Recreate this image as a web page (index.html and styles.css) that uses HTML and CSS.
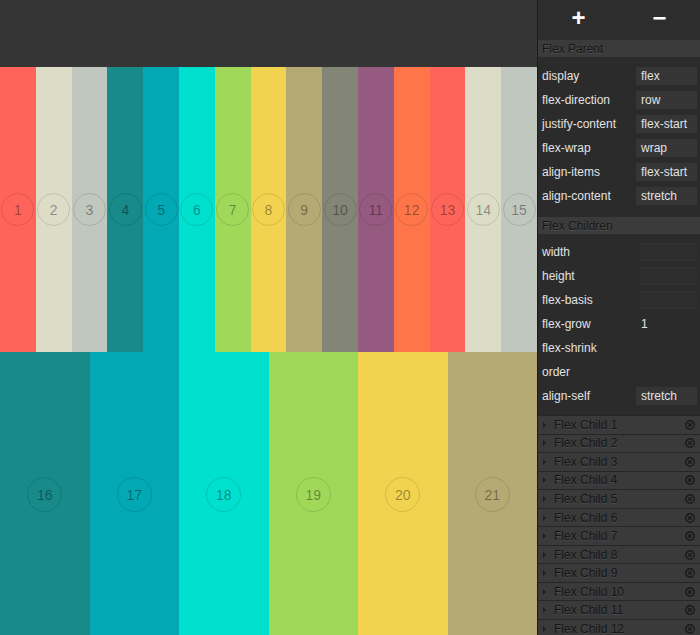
FILE: index.html
```html
<!DOCTYPE html>
<html>
<head>
<meta charset="utf-8">
<link rel="stylesheet" href="styles.css">
</head>
<body>
<div class="app">
  <div class="stage">
    <div class="topbar"></div>
    <div class="row row1">
      <div class="item c1"><span class="num">1</span></div>
      <div class="item c2"><span class="num">2</span></div>
      <div class="item c3"><span class="num">3</span></div>
      <div class="item c4"><span class="num">4</span></div>
      <div class="item c5"><span class="num">5</span></div>
      <div class="item c6"><span class="num">6</span></div>
      <div class="item c7"><span class="num">7</span></div>
      <div class="item c8"><span class="num">8</span></div>
      <div class="item c9"><span class="num">9</span></div>
      <div class="item c10"><span class="num">10</span></div>
      <div class="item c11"><span class="num">11</span></div>
      <div class="item c12"><span class="num">12</span></div>
      <div class="item c1"><span class="num">13</span></div>
      <div class="item c2"><span class="num">14</span></div>
      <div class="item c3"><span class="num">15</span></div>
    </div>
    <div class="row row2">
      <div class="item c4"><span class="num">16</span></div>
      <div class="item c5"><span class="num">17</span></div>
      <div class="item c6"><span class="num">18</span></div>
      <div class="item c7"><span class="num">19</span></div>
      <div class="item c8"><span class="num">20</span></div>
      <div class="item c9"><span class="num">21</span></div>
    </div>
  </div>
  <div class="panel">
    <div class="tools">
      <div class="tool">+</div>
      <div class="tool">−</div>
    </div>
    <div class="section-head">Flex Parent</div>
    <div class="props parent-props">
      <div class="prop"><span class="label">display</span><span class="field">flex</span></div>
      <div class="prop"><span class="label">flex-direction</span><span class="field">row</span></div>
      <div class="prop"><span class="label">justify-content</span><span class="field">flex-start</span></div>
      <div class="prop"><span class="label">flex-wrap</span><span class="field">wrap</span></div>
      <div class="prop"><span class="label">align-items</span><span class="field">flex-start</span></div>
      <div class="prop"><span class="label">align-content</span><span class="field">stretch</span></div>
    </div>
    <div class="section-head">Flex Children</div>
    <div class="props child-props">
      <div class="prop"><span class="label">width</span><span class="field empty"></span></div>
      <div class="prop"><span class="label">height</span><span class="field empty"></span></div>
      <div class="prop"><span class="label">flex-basis</span><span class="field empty"></span></div>
      <div class="prop"><span class="label">flex-grow</span><span class="field plain">1</span></div>
      <div class="prop"><span class="label">flex-shrink</span><span class="field none"></span></div>
      <div class="prop"><span class="label">order</span><span class="field none"></span></div>
      <div class="prop"><span class="label">align-self</span><span class="field">stretch</span></div>
    </div>
    <div class="children">
      <div class="child"><span class="arrow"></span><span class="cname">Flex Child 1</span><svg class="close" viewBox="0 0 10 10"><circle cx="5" cy="5" r="4.2"/><path d="M3.3 3.3L6.7 6.7M6.7 3.3L3.3 6.7"/></svg></div>
      <div class="child"><span class="arrow"></span><span class="cname">Flex Child 2</span><svg class="close" viewBox="0 0 10 10"><circle cx="5" cy="5" r="4.2"/><path d="M3.3 3.3L6.7 6.7M6.7 3.3L3.3 6.7"/></svg></div>
      <div class="child"><span class="arrow"></span><span class="cname">Flex Child 3</span><svg class="close" viewBox="0 0 10 10"><circle cx="5" cy="5" r="4.2"/><path d="M3.3 3.3L6.7 6.7M6.7 3.3L3.3 6.7"/></svg></div>
      <div class="child"><span class="arrow"></span><span class="cname">Flex Child 4</span><svg class="close" viewBox="0 0 10 10"><circle cx="5" cy="5" r="4.2"/><path d="M3.3 3.3L6.7 6.7M6.7 3.3L3.3 6.7"/></svg></div>
      <div class="child"><span class="arrow"></span><span class="cname">Flex Child 5</span><svg class="close" viewBox="0 0 10 10"><circle cx="5" cy="5" r="4.2"/><path d="M3.3 3.3L6.7 6.7M6.7 3.3L3.3 6.7"/></svg></div>
      <div class="child"><span class="arrow"></span><span class="cname">Flex Child 6</span><svg class="close" viewBox="0 0 10 10"><circle cx="5" cy="5" r="4.2"/><path d="M3.3 3.3L6.7 6.7M6.7 3.3L3.3 6.7"/></svg></div>
      <div class="child"><span class="arrow"></span><span class="cname">Flex Child 7</span><svg class="close" viewBox="0 0 10 10"><circle cx="5" cy="5" r="4.2"/><path d="M3.3 3.3L6.7 6.7M6.7 3.3L3.3 6.7"/></svg></div>
      <div class="child"><span class="arrow"></span><span class="cname">Flex Child 8</span><svg class="close" viewBox="0 0 10 10"><circle cx="5" cy="5" r="4.2"/><path d="M3.3 3.3L6.7 6.7M6.7 3.3L3.3 6.7"/></svg></div>
      <div class="child"><span class="arrow"></span><span class="cname">Flex Child 9</span><svg class="close" viewBox="0 0 10 10"><circle cx="5" cy="5" r="4.2"/><path d="M3.3 3.3L6.7 6.7M6.7 3.3L3.3 6.7"/></svg></div>
      <div class="child"><span class="arrow"></span><span class="cname">Flex Child 10</span><svg class="close" viewBox="0 0 10 10"><circle cx="5" cy="5" r="4.2"/><path d="M3.3 3.3L6.7 6.7M6.7 3.3L3.3 6.7"/></svg></div>
      <div class="child"><span class="arrow"></span><span class="cname">Flex Child 11</span><svg class="close" viewBox="0 0 10 10"><circle cx="5" cy="5" r="4.2"/><path d="M3.3 3.3L6.7 6.7M6.7 3.3L3.3 6.7"/></svg></div>
      <div class="child"><span class="arrow"></span><span class="cname">Flex Child 12</span><svg class="close" viewBox="0 0 10 10"><circle cx="5" cy="5" r="4.2"/><path d="M3.3 3.3L6.7 6.7M6.7 3.3L3.3 6.7"/></svg></div>
    </div>
  </div>
</div>
</body>
</html>
```

FILE: styles.css
```css
html, body {
  margin: 0;
  padding: 0;
  width: 700px;
  height: 635px;
  overflow: hidden;
  background: #2b2b2b;
  font-family: "Liberation Sans", Arial, Helvetica, sans-serif;
}

.app {
  display: flex;
  width: 700px;
  height: 635px;
}

.stage {
  width: 537px;
  flex: none;
  display: flex;
  flex-direction: column;
  overflow: hidden;
}

.topbar {
  height: 67px;
  flex: none;
  background: #353535;
}

.row {
  display: flex;
  height: 285px;
  flex: none;
}

.item {
  flex: 1 1 0;
  display: flex;
  align-items: center;
  justify-content: center;
}

.num {
  width: 33px;
  height: 33px;
  flex: none;
  box-sizing: border-box;
  border: 1px solid rgba(0, 0, 0, 0.12);
  border-radius: 50%;
  display: flex;
  align-items: center;
  justify-content: center;
  font-size: 14px;
  color: rgba(0, 0, 0, 0.38);
}

.row2 .num {
  width: 35px;
  height: 35px;
}

.c1 { background: #fe645a; }
.c2 { background: #dcdcc7; }
.c3 { background: #c0c7bf; }
.c4 { background: #178a89; }
.c5 { background: #02a9b4; }
.c6 { background: #00e0cf; }
.c7 { background: #a0d85a; }
.c8 { background: #f2d34f; }
.c9 { background: #b6aa74; }
.c10 { background: #838676; }
.c11 { background: #965a80; }
.c12 { background: #fe7549; }

.panel {
  width: 163px;
  flex: none;
  box-sizing: border-box;
  border-left: 1px solid #1c1c1c;
  background: #2b2b2b;
  display: flex;
  flex-direction: column;
  overflow: hidden;
}

.tools {
  height: 40px;
  flex: none;
  display: flex;
  background: #2d2d2d;
}

.tool {
  flex: 1;
  display: flex;
  align-items: center;
  justify-content: center;
  color: #ffffff;
  font-size: 24px;
  font-weight: bold;
  padding-bottom: 4px;
}

.section-head {
  height: 17px;
  flex: none;
  background: #3b3b3b;
  color: #161616;
  font-size: 12px;
  line-height: 18px;
  padding-left: 4px;
  text-shadow: 0 1px 0 rgba(255, 255, 255, 0.12);
}

.props {
  display: flex;
  flex-direction: column;
}

.parent-props {
  padding: 7px 0 9px;
}

.child-props {
  padding: 6px 0 7px;
}

.prop {
  height: 24px;
  display: flex;
  align-items: center;
  justify-content: space-between;
  padding-left: 4px;
  padding-right: 3px;
}

.label {
  color: #e2e2e2;
  font-size: 12px;
}

.field {
  width: 61px;
  height: 18px;
  box-sizing: border-box;
  background: #353535;
  color: #e2e2e2;
  font-size: 12px;
  line-height: 18px;
  padding-left: 5px;
}

.field.empty {
  width: 57px;
  background: #2e2e2e;
  border-top: 1px solid #323232;
  border-bottom: 1px solid #323232;
}

.field.plain {
  width: 57px;
  background: transparent;
  padding-left: 1px;
}

.field.none {
  background: transparent;
}

.children {
  display: flex;
  flex-direction: column;
}

.child {
  height: 17.55px;
  flex: none;
  border-top: 1px solid #262626;
  background: #3a3a3a;
  display: flex;
  align-items: center;
  padding-left: 5px;
  padding-right: 5px;
}

.arrow {
  width: 0;
  height: 0;
  border-top: 3px solid transparent;
  border-bottom: 3px solid transparent;
  border-left: 3px solid #1e1e1e;
  margin-right: 8px;
}

.cname {
  flex: 1;
  color: #151515;
  font-size: 12px;
  text-shadow: 0 1px 0 rgba(255, 255, 255, 0.1);
}

.close {
  width: 10px;
  height: 10px;
  flex: none;
  fill: none;
  stroke: #1a1a1a;
  stroke-width: 1.4;
}
```
